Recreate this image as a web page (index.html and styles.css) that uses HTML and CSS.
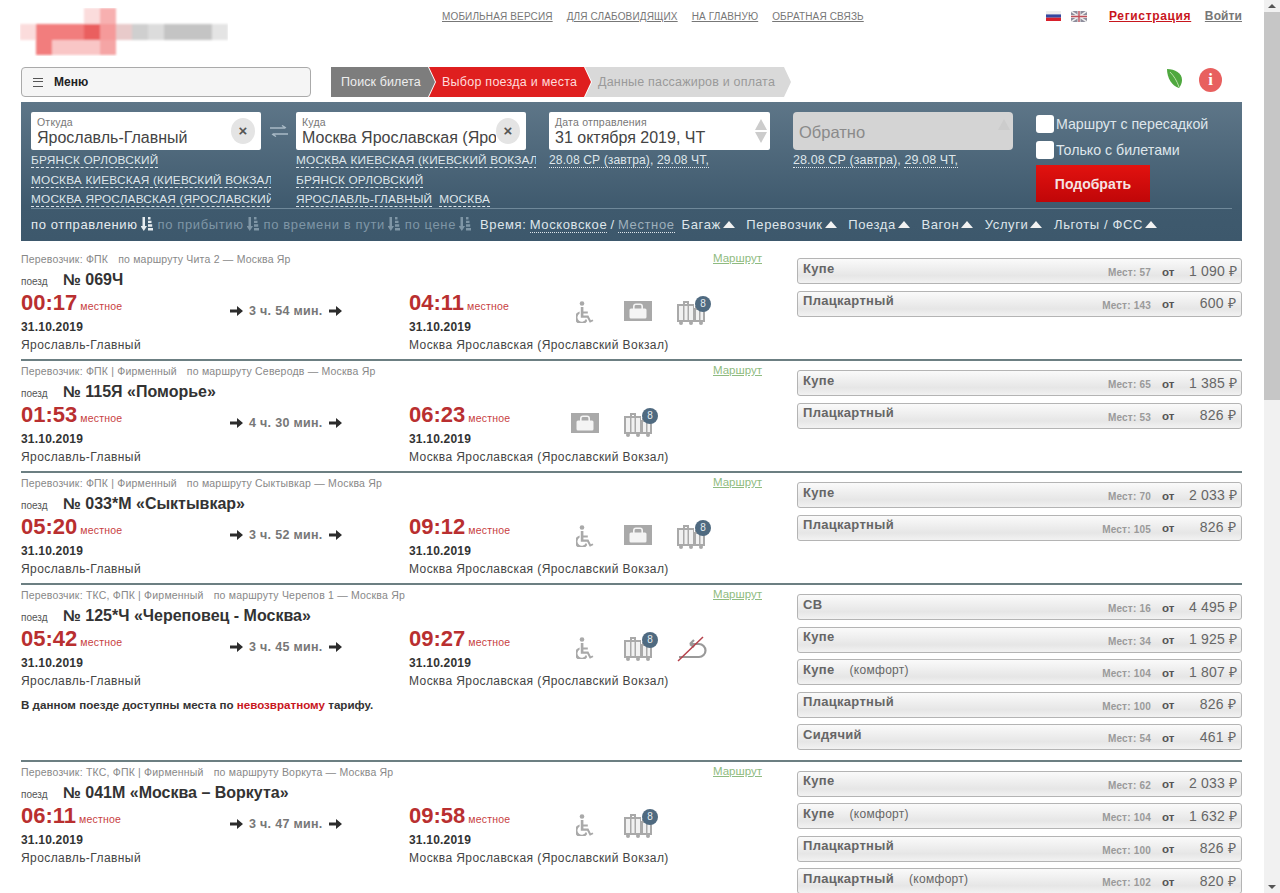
FILE: index.html
```html
<!DOCTYPE html>
<html lang="ru">
<head>
<meta charset="UTF-8">
<title>Выбор поезда и места</title>
<link rel="stylesheet" href="styles.css">
</head>
<body>
<svg class="defs" width="0" height="0">
	<defs>
		<symbol id="chair" viewBox="0 0 18 22">
			<circle cx="6" cy="2.500" r="2.300"/>
			<path d="M4.800 6h2.600v4.400h4.400v2H7.400v2.200h5l2.400 4.600 1.800-.8.800 1.700-3.600 1.600-2.600-5H4.800z"/>
			<path d="M3.600 10.400v2.200a4.400 4.400 0 1 0 6.400 5.200l1.200 2.200a6.600 6.600 0 1 1-7.600-9.600z"/>
		</symbol>
		<symbol id="bag" viewBox="0 0 28 20">
			<rect width="28" height="20"/>
			<path d="M9 8V5.500A3 3 0 0 1 12 2.500h4A3 3 0 0 1 19 5.500V8h-1.600V5.500a1.400 1.400 0 0 0-1.400-1.400h-4a1.400 1.400 0 0 0-1.400 1.400V8zM7 7.500h14q1.500 0 1.500 1.500v7q0 1.500-1.500 1.500H7q-1.500 0-1.500-1.500V9q0-1.500 1.500-1.500z" fill="#f4f4f4"/>
		</symbol>
		<symbol id="cases" viewBox="0 0 28 24">
			<path d="M6 3V0h6v3h5v4h1V5h6v2h4v14H0V3zM8 2v1h2V2zM20 6.500V7h2v-.5z"/>
			<path d="M2 5h4v14H2zM7.500 5h3v14h-3zM12 5h4v14h-4zM19 9h3v10h-3zM23.500 9H26v10h-2.500z" fill="#f1f1f1"/>
			<circle cx="4" cy="22" r="2"/><circle cx="14" cy="22" r="2"/><circle cx="24" cy="22" r="2"/>
		</symbol>
		<symbol id="sort" viewBox="0 0 12 14">
			<path d="M1.500 0h2.500v9h2l-3.200 5L-.500 9h2z"/>
			<path d="M7 0h2.500v2.500H7zM7 3.700h3.500v2.400H7zM7 7.300h4.200v2.400H7zM7 11h5v2.500H7z"/>
		</symbol>
		<symbol id="go" viewBox="0 0 13 10">
			<path d="M0 3.500h7V0l6 5-6 5V6.500H0z"/>
		</symbol>
	</defs>
</svg>

<div class="screen">
<div class="page">

	<div class="top">
		<svg class="logo" width="208" height="48" viewBox="0 0 208 48">
			<defs><filter id="pix"><feGaussianBlur stdDeviation="1.200"/></filter></defs>
			<g filter="url(#pix)">
				<rect x="0" y="16" width="16" height="16" fill="#fbdcdc"/>
				<rect x="16" y="16" width="48" height="16" fill="#f27d7d"/>
				<rect x="64" y="16" width="16" height="16" fill="#ea5f5f"/>
				<rect x="80" y="16" width="16" height="16" fill="#f59a9a"/>
				<rect x="16" y="32" width="16" height="15" fill="#f27d7d"/>
				<rect x="32" y="32" width="48" height="15" fill="#f9c6c6"/>
				<rect x="80" y="32" width="16" height="15" fill="#f5a5a5"/>
				<rect x="64" y="0" width="16" height="16" fill="#fbdcdc"/>
				<rect x="80" y="0" width="16" height="16" fill="#f7b0b0"/>
				<rect x="96" y="16" width="16" height="16" fill="#e8caca"/>
				<rect x="112" y="16" width="16" height="16" fill="#cfcfcf"/>
				<rect x="128" y="16" width="16" height="16" fill="#dcdcdc"/>
				<rect x="144" y="16" width="48" height="16" fill="#c4c4c4"/>
				<rect x="192" y="16" width="16" height="16" fill="#e4e4e4"/>
			</g>
		</svg>
		<nav class="toplinks">
			<a>Мобильная версия</a>
			<a>Для слабовидящих</a>
			<a>На главную</a>
			<a>Обратная связь</a>
		</nav>
		<div class="flags">
			<svg width="15" height="10" viewBox="0 0 15 10"><rect width="15" height="3.400" fill="#eee"/><rect y="3.400" width="15" height="3.300" fill="#3448a0"/><rect y="6.700" width="15" height="3.300" fill="#d8202c"/></svg>
			<svg width="16" height="11" viewBox="0 0 16 11"><rect width="16" height="11" fill="#8d8d9c"/><path d="M0 0l16 11M16 0L0 11" stroke="#eee" stroke-width="1.500"/><path d="M8 0v11M0 5.500h16" stroke="#eee" stroke-width="3"/><path d="M8 0v11M0 5.500h16" stroke="#c0505a" stroke-width="1.400"/></svg>
		</div>
		<a class="reg">Регистрация</a>
		<a class="login">Войти</a>
	</div>

	<div class="toolbar">
		<div class="menu"><span class="burger"></span>Меню</div>
		<div class="steps">
			<div class="step step-done">Поиск билета</div>
			<div class="step step-now">Выбор поезда и места</div>
			<div class="step step-next">Данные пассажиров и оплата</div>
		</div>
		<div class="tools">
			<svg width="17" height="21" viewBox="0 0 17 21"><path d="M1 1c8 0 15 4 15 11 0 3-1 5-3 8C6 18 1 10 1 1z" fill="#4fa83f"/><path d="M4 4c4 4 7 9 9 15" stroke="#b9e0a8" fill="none"/></svg>
			<div class="info">i</div>
		</div>
	</div>

	<div class="search">
		<div class="fields">
			<div class="col col-from">
				<div class="box">
					<label>Откуда</label>
					<div class="val">Ярославль-Главный</div>
					<span class="clear">×</span>
				</div>
				<div class="hints">
					<div><a>Брянск Орловский</a></div>
					<div><a>Москва Киевская (Киевский вокзал)</a></div>
					<div><a>Москва Ярославская (Ярославский вокзал)</a></div>
				</div>
			</div>
			<svg class="swap" width="18" height="12" viewBox="0 0 18 12"><path d="M0 3h15M12 .5L16 3M18 9H3M6 11.500L2 9" stroke="#a9bac6" stroke-width="1.400" fill="none"/></svg>
			<div class="col col-to">
				<div class="box">
					<label>Куда</label>
					<div class="val">Москва Ярославская (Ярославский вокзал)</div>
					<span class="clear">×</span>
				</div>
				<div class="hints">
					<div><a>Москва Киевская (Киевский вокзал)</a></div>
					<div><a>Брянск Орловский</a></div>
					<div><a>Ярославль-Главный</a> &nbsp;<a>Москва</a></div>
				</div>
			</div>
			<div class="col col-date">
				<div class="box">
					<label>Дата отправления</label>
					<div class="val">31 октября 2019, ЧТ</div>
					<span class="spin"><i class="up"></i><i class="down"></i></span>
				</div>
				<div class="dates"><a>28.08 СР (завтра)</a>, <a>29.08 ЧТ,</a></div>
			</div>
			<div class="col col-back">
				<div class="box box-off">
					<div class="val">Обратно</div>
					<span class="spin"><i class="up"></i></span>
				</div>
				<div class="dates"><a>28.08 СР (завтра)</a>, <a>29.08 ЧТ,</a></div>
			</div>
			<div class="col col-opts">
				<div class="opt"><span class="check"></span>Маршрут с пересадкой</div>
				<div class="opt"><span class="check"></span>Только с билетами</div>
				<div class="pick">Подобрать</div>
			</div>
		</div>
		<div class="sortbar">
			<span class="s s-on">по отправлению<svg><use href="#sort"/></svg></span>
			<span class="s">по прибытию<svg><use href="#sort"/></svg></span>
			<span class="s">по времени в пути<svg><use href="#sort"/></svg></span>
			<span class="s">по цене<svg><use href="#sort"/></svg></span>
			<span class="tz">Время: <a>Московское</a> / <a class="tz-off">Местное</a></span>
			<span class="f">Багаж</span>
			<span class="f">Перевозчик</span>
			<span class="f">Поезда</span>
			<span class="f">Вагон</span>
			<span class="f">Услуги</span>
			<span class="f">Льготы / ФСС</span>
		</div>
	</div>

	<div class="train">
		<div class="info-col">
			<div class="meta"><span>Перевозчик: ФПК<b>по маршруту Чита 2 — Москва Яр</b></span><a>Маршрут</a></div>
			<div class="name"><small>поезд</small><strong>№ 069Ч</strong></div>
			<div class="times">
				<div><div class="t">00:17<em>местное</em></div><div class="d">31.10.2019</div><div class="st">Ярославль-Главный</div></div>
				<div class="dur"><svg><use href="#go"/></svg>3 ч. 54 мин.<svg><use href="#go"/></svg></div>
				<div><div class="t">04:11<em>местное</em></div><div class="d">31.10.2019</div><div class="st">Москва Ярославская (Ярославский Вокзал)</div></div>
				<div class="icons">
					<span class="ic"><svg class="i-chair"><use href="#chair"/></svg></span>
					<span class="ic"><svg class="i-bag"><use href="#bag"/></svg></span>
					<span class="ic"><svg class="i-cases"><use href="#cases"/></svg><span class="badge">8</span></span>
				</div>
			</div>
		</div>
		<div class="cars">
			<div class="car"><span class="c">Купе</span><span class="seats">Мест: 57</span><span class="from">от</span><span class="price">1 090 ₽</span></div>
			<div class="car"><span class="c">Плацкартный</span><span class="seats">Мест: 143</span><span class="from">от</span><span class="price">600 ₽</span></div>
		</div>
	</div>

	<div class="train">
		<div class="info-col">
			<div class="meta"><span>Перевозчик: ФПК | Фирменный<b>по маршруту Северодв — Москва Яр</b></span><a>Маршрут</a></div>
			<div class="name"><small>поезд</small><strong>№ 115Я «Поморье»</strong></div>
			<div class="times">
				<div><div class="t">01:53<em>местное</em></div><div class="d">31.10.2019</div><div class="st">Ярославль-Главный</div></div>
				<div class="dur"><svg><use href="#go"/></svg>4 ч. 30 мин.<svg><use href="#go"/></svg></div>
				<div><div class="t">06:23<em>местное</em></div><div class="d">31.10.2019</div><div class="st">Москва Ярославская (Ярославский Вокзал)</div></div>
				<div class="icons">
					<span class="ic"><svg class="i-bag"><use href="#bag"/></svg></span>
					<span class="ic"><svg class="i-cases"><use href="#cases"/></svg><span class="badge">8</span></span>
				</div>
			</div>
		</div>
		<div class="cars">
			<div class="car"><span class="c">Купе</span><span class="seats">Мест: 65</span><span class="from">от</span><span class="price">1 385 ₽</span></div>
			<div class="car"><span class="c">Плацкартный</span><span class="seats">Мест: 53</span><span class="from">от</span><span class="price">826 ₽</span></div>
		</div>
	</div>

	<div class="train">
		<div class="info-col">
			<div class="meta"><span>Перевозчик: ФПК | Фирменный<b>по маршруту Сыктывкар — Москва Яр</b></span><a>Маршрут</a></div>
			<div class="name"><small>поезд</small><strong>№ 033*М «Сыктывкар»</strong></div>
			<div class="times">
				<div><div class="t">05:20<em>местное</em></div><div class="d">31.10.2019</div><div class="st">Ярославль-Главный</div></div>
				<div class="dur"><svg><use href="#go"/></svg>3 ч. 52 мин.<svg><use href="#go"/></svg></div>
				<div><div class="t">09:12<em>местное</em></div><div class="d">31.10.2019</div><div class="st">Москва Ярославская (Ярославский Вокзал)</div></div>
				<div class="icons">
					<span class="ic"><svg class="i-chair"><use href="#chair"/></svg></span>
					<span class="ic"><svg class="i-bag"><use href="#bag"/></svg></span>
					<span class="ic"><svg class="i-cases"><use href="#cases"/></svg><span class="badge">8</span></span>
				</div>
			</div>
		</div>
		<div class="cars">
			<div class="car"><span class="c">Купе</span><span class="seats">Мест: 70</span><span class="from">от</span><span class="price">2 033 ₽</span></div>
			<div class="car"><span class="c">Плацкартный</span><span class="seats">Мест: 105</span><span class="from">от</span><span class="price">826 ₽</span></div>
		</div>
	</div>

	<div class="train">
		<div class="info-col">
			<div class="meta"><span>Перевозчик: ТКС, ФПК | Фирменный<b>по маршруту Черепов 1 — Москва Яр</b></span><a>Маршрут</a></div>
			<div class="name"><small>поезд</small><strong>№ 125*Ч «Череповец - Москва»</strong></div>
			<div class="times">
				<div><div class="t">05:42<em>местное</em></div><div class="d">31.10.2019</div><div class="st">Ярославль-Главный</div></div>
				<div class="dur"><svg><use href="#go"/></svg>3 ч. 45 мин.<svg><use href="#go"/></svg></div>
				<div><div class="t">09:27<em>местное</em></div><div class="d">31.10.2019</div><div class="st">Москва Ярославская (Ярославский Вокзал)</div></div>
				<div class="icons">
					<span class="ic"><svg class="i-chair"><use href="#chair"/></svg></span>
					<span class="ic"><svg class="i-cases"><use href="#cases"/></svg><span class="badge">8</span></span>
					<span class="ic"><svg class="i-noway" viewBox="0 0 32 26"><path d="M2 21h20a6.500 6.500 0 0 0 0-13H13M13 8l4-4M13 8l4 3" stroke="#999" stroke-width="2.200" fill="none"/><path d="M1 25L26 1" stroke="#b5404a" stroke-width="1.500"/></svg></span>
				</div>
			</div>
			<div class="note">В данном поезде доступны места по <span>невозвратному</span> тарифу.</div>
		</div>
		<div class="cars">
			<div class="car"><span class="c">СВ</span><span class="seats">Мест: 16</span><span class="from">от</span><span class="price">4 495 ₽</span></div>
			<div class="car"><span class="c">Купе</span><span class="seats">Мест: 34</span><span class="from">от</span><span class="price">1 925 ₽</span></div>
			<div class="car"><span class="c">Купе<i>(комфорт)</i></span><span class="seats">Мест: 104</span><span class="from">от</span><span class="price">1 807 ₽</span></div>
			<div class="car"><span class="c">Плацкартный</span><span class="seats">Мест: 100</span><span class="from">от</span><span class="price">826 ₽</span></div>
			<div class="car"><span class="c">Сидячий</span><span class="seats">Мест: 54</span><span class="from">от</span><span class="price">461 ₽</span></div>
		</div>
	</div>

	<div class="train">
		<div class="info-col">
			<div class="meta"><span>Перевозчик: ТКС, ФПК | Фирменный<b>по маршруту Воркута — Москва Яр</b></span><a>Маршрут</a></div>
			<div class="name"><small>поезд</small><strong>№ 041М «Москва – Воркута»</strong></div>
			<div class="times">
				<div><div class="t">06:11<em>местное</em></div><div class="d">31.10.2019</div><div class="st">Ярославль-Главный</div></div>
				<div class="dur"><svg><use href="#go"/></svg>3 ч. 47 мин.<svg><use href="#go"/></svg></div>
				<div><div class="t">09:58<em>местное</em></div><div class="d">31.10.2019</div><div class="st">Москва Ярославская (Ярославский Вокзал)</div></div>
				<div class="icons">
					<span class="ic"><svg class="i-chair"><use href="#chair"/></svg></span>
					<span class="ic"><svg class="i-cases"><use href="#cases"/></svg><span class="badge">8</span></span>
				</div>
			</div>
		</div>
		<div class="cars">
			<div class="car"><span class="c">Купе</span><span class="seats">Мест: 62</span><span class="from">от</span><span class="price">2 033 ₽</span></div>
			<div class="car"><span class="c">Купе<i>(комфорт)</i></span><span class="seats">Мест: 104</span><span class="from">от</span><span class="price">1 632 ₽</span></div>
			<div class="car"><span class="c">Плацкартный</span><span class="seats">Мест: 100</span><span class="from">от</span><span class="price">826 ₽</span></div>
			<div class="car"><span class="c">Плацкартный<i>(комфорт)</i></span><span class="seats">Мест: 102</span><span class="from">от</span><span class="price">820 ₽</span></div>
		</div>
	</div>

</div>
<div class="scroll">
	<span class="arrow arrow-up"></span>
	<div class="thumb"></div>
	<span class="arrow arrow-down"></span>
</div>
</div>
</body>
</html>
```

FILE: styles.css
```css
* {
	margin: 0;
	padding: 0;
	box-sizing: border-box;
}

html, body {
	height: 893px;
	overflow: hidden;
	background: #fff;
}

body {
	font-family: "Liberation Sans", Arial, sans-serif;
	color: #333;
}

.defs {
	position: absolute;
}

.screen {
	display: flex;
	height: 893px;
	overflow: hidden;
}

.page {
	width: 1264px;
	padding: 0 22px 0 21px;
	flex: none;
}

/* scrollbar */
.scroll {
	width: 16px;
	background: #f1f1f1;
	display: flex;
	flex-direction: column;
	align-items: center;
	justify-content: space-between;
}

.thumb {
	width: 16px;
	height: 388px;
	background: #c6c6c6;
	margin-bottom: auto;
}

.arrow {
	width: 0;
	height: 0;
	margin: 4px 0;
	border-left: 4px solid transparent;
	border-right: 4px solid transparent;
}

.arrow-up {
	border-bottom: 4px solid #555;
}

.arrow-down {
	border-top: 4px solid #555;
}

/* top */
.top {
	height: 67px;
	display: flex;
	align-items: flex-start;
}

.logo {
	margin: 8px 0 0 -1px;
	flex: none;
}

.toplinks {
	display: flex;
	gap: 14px;
	margin: 11px 0 0 214px;
	width: 604px;
	font-size: 10px;
	line-height: 12px;
	letter-spacing: .14px;
	text-transform: uppercase;
	color: #777;
}

.toplinks a {
	text-decoration: underline;
}

.flags {
	display: flex;
	gap: 10px;
	margin-top: 11px;
	width: 63px;
	flex: none;
}

.reg, .login {
	font-size: 12px;
	line-height: 14px;
	margin-top: 9px;
	font-weight: bold;
	text-decoration: underline;
	letter-spacing: .65px;
}

.reg {
	color: #c8161d;
}

.login {
	color: #777;
	margin-left: auto;
	letter-spacing: .1px;
}

.toolbar {
	display: flex;
	height: 35px;
}

.menu {
	width: 290px;
	height: 30px;
	border: 1px solid #aaa;
	border-radius: 4px;
	background: #f5f5f5;
	font-size: 12px;
	font-weight: bold;
	line-height: 28px;
	padding-left: 11px;
	display: flex;
	align-items: center;
	color: #222;
}

.burger {
	width: 10px;
	height: 9px;
	margin-right: 11px;
	border-top: 1.500px solid #555;
	border-bottom: 1.500px solid #555;
}

.burger:after {
	content: "";
	display: block;
	height: 1.500px;
	margin-top: 2.250px;
	background: #555;
}

.steps {
	display: flex;
	margin-left: 20px;
	height: 30px;
	font-size: 12.500px;
	line-height: 30px;
	letter-spacing: .25px;
}

.step {
	white-space: nowrap;
	margin-right: -6px;
	clip-path: polygon(0 0, calc(100% - 7px) 0, 100% 50%, calc(100% - 7px) 100%, 0 100%, 7px 50%);
}

.step-done {
	width: 104px;
	padding-left: 10px;
	letter-spacing: .1px;
	background: #7d7d7d;
	color: #eee;
	clip-path: polygon(0 0, calc(100% - 7px) 0, 100% 50%, calc(100% - 7px) 100%, 0 100%);
}

.step-now {
	width: 162px;
	padding-left: 13px;
	background: #df1f1f;
	color: #ffdcdc;
}

.step-next {
	width: 206px;
	padding-left: 13px;
	letter-spacing: .2px;
	background: #d9d9d9;
	color: #9a9a9a;
}

.tools {
	margin-left: auto;
	margin-right: 20px;
	display: flex;
	align-items: flex-start;
	gap: 16px;
	padding-top: 1px;
}

.info {
	width: 23px;
	height: 24px;
	border-radius: 50%;
	background: #e8605f;
	color: #fff;
	font: bold 17px/24px "Liberation Serif", serif;
	text-align: center;
}

/* search panel */
.search {
	height: 139px;
	margin-bottom: 8px;
	padding: 10px 10px 0;
	background: linear-gradient(#5e7688, #3f5a6e 75%, #3d586c);
	color: #dfe6eb;
}

.fields {
	display: flex;
	height: 96px;
}

.col {
	flex: none;
}

.col-from, .col-to {
	width: 240px;
}

.col-to {
	margin-left: 8px;
}

.swap {
	margin: 13px 0 0 -1px;
	flex: none;
}

.col-date {
	width: 221px;
	margin-left: 13px;
}

.col-back {
	width: 220px;
	margin-left: 23px;
}

.col-opts {
	margin-left: 23px;
}

.box {
	position: relative;
	width: 230px;
	height: 38px;
	background: #fff;
	border-radius: 2px;
	padding: 5px 30px 0 6px;
	color: #444;
	overflow: hidden;
}

.col-date .box {
	width: 221px;
}

.box-off {
	width: 220px;
	background: #d4d4d4;
	color: #8a8a8a;
	padding-top: 11px;
	border-radius: 4px;
}

.box label {
	display: block;
	font-size: 10.500px;
	line-height: 11px;
	color: #777;
	letter-spacing: .2px;
}

.val {
	font-size: 16px;
	line-height: 19px;
	white-space: nowrap;
	overflow: hidden;
}

.box-off .val {
	font-size: 16.500px;
}

.clear {
	position: absolute;
	right: 6px;
	top: 6px;
	width: 24px;
	height: 26px;
	border-radius: 50%;
	background: #e4e4e4;
	color: #555;
	font: bold 15px/25px "Liberation Sans", sans-serif;
	text-align: center;
}

.spin {
	position: absolute;
	right: 3px;
	top: 7px;
}

.spin i {
	display: block;
	width: 0;
	height: 0;
	margin-bottom: 2px;
	border-left: 6px solid transparent;
	border-right: 6px solid transparent;
}

.spin .up {
	border-bottom: 11px solid #ccc;
}

.spin .down {
	border-top: 11px solid #ccc;
}

.hints {
	margin-top: 1px;
	font-size: 11.800px;
	line-height: 19.500px;
	letter-spacing: .2px;
	text-transform: uppercase;
	white-space: nowrap;
	overflow: hidden;
}

.hints a {
	border-bottom: 1px dashed #dfe6eb;
}

.dates {
	margin-top: 1px;
	font-size: 12.500px;
	line-height: 19px;
	letter-spacing: .1px;
	white-space: nowrap;
}

.col-date .dates {
	font-size: 12.100px;
}

.dates a {
	border-bottom: 1px dotted #dfe6eb;
}

.opt {
	display: flex;
	align-items: center;
	height: 26px;
	font-size: 14.200px;
	white-space: nowrap;
	position: relative;
	top: -1px;
}

.check {
	width: 18px;
	height: 18px;
	margin-right: 2px;
	border-radius: 3px;
	background: #fff;
}

.pick {
	width: 114px;
	height: 37px;
	margin-top: 1px;
	background: linear-gradient(#e2120f, #c00608);
	color: #f6e3e3;
	font-size: 14px;
	font-weight: bold;
	line-height: 38px;
	text-align: center;
}

.sortbar {
	display: flex;
	align-items: center;
	height: 31px;
	border-top: 1px solid #6f8899;
	font-size: 13px;
	letter-spacing: .62px;
	white-space: nowrap;
}

.sortbar svg {
	width: 12px;
	height: 14px;
	margin-left: 3px;
	vertical-align: -2px;
	fill: #7f96a6;
}

.s {
	color: #7f96a6;
	margin-right: 5px;
}

.s-on {
	color: #e6ecf0;
}

.s-on svg {
	fill: #e6ecf0;
}

.tz {
	margin-left: 4px;
	margin-right: 7px;
	word-spacing: -1px;
}

.tz a {
	border-bottom: 1px dotted #dfe6eb;
}

.tz .tz-off {
	color: #9fb0bc;
}

.f {
	margin-right: 11.500px;
	display: flex;
	align-items: center;
}

.f:after {
	content: "";
	margin-left: 2px;
	border-left: 6px solid transparent;
	border-right: 6px solid transparent;
	border-bottom: 7px solid #f2f2f2;
}

/* trains */
.train {
	display: flex;
	justify-content: space-between;
	min-height: 112px;
	padding: 3px 0;
	border-bottom: 2px solid #6c7f82;
}

.train:last-child {
	border-bottom: 0;
}

.info-col {
	width: 741px;
}

.meta {
	display: flex;
	justify-content: space-between;
	height: 14px;
	font-size: 10.500px;
	line-height: 14px;
	letter-spacing: .2px;
	color: #888;
}

.meta b {
	font-weight: normal;
	margin-left: 10px;
}

.meta a {
	font-size: 11.500px;
	letter-spacing: 0;
	color: #8fbb80;
	text-decoration: underline;
	position: relative;
	top: -1px;
}

.name {
	display: flex;
	align-items: baseline;
	height: 26px;
	line-height: 28px;
}

.name small {
	width: 42px;
	font-size: 10px;
	color: #555;
}

.name strong {
	font-size: 16px;
	color: #333;
}

.times {
	display: grid;
	grid-template-columns: 209px 179px 162px 1fr;
}

.t {
	height: 22px;
	font-size: 22px;
	line-height: 22px;
	font-weight: bold;
	color: #b92f30;
	white-space: nowrap;
}

.t em {
	margin-left: 3px;
	font-size: 10.500px;
	font-style: normal;
	font-weight: normal;
	letter-spacing: .2px;
	color: #c8413f;
}

.d {
	margin-top: 4px;
	height: 18px;
	font-size: 12px;
	line-height: 18px;
	font-weight: bold;
	letter-spacing: .2px;
}

.st {
	height: 18px;
	font-size: 12px;
	line-height: 18px;
	letter-spacing: .42px;
	white-space: nowrap;
	color: #444;
}

.dur {
	display: flex;
	align-items: center;
	height: 20px;
	margin-top: 9px;
	gap: 6px;
	font-size: 12.500px;
	font-weight: bold;
	letter-spacing: .3px;
	color: #777;
}

.dur svg {
	width: 13px;
	height: 10px;
	fill: #2c2c2c;
}

.icons {
	display: flex;
	height: 30px;
	margin-top: 8px;
}

.ic {
	position: relative;
	width: 53px;
	flex: none;
	fill: #a9a9a9;
}

.i-chair {
	width: 18px;
	height: 22px;
	margin: 1px 0 0 5px;
}

.i-bag {
	width: 28px;
	height: 20px;
	margin-top: 1px;
}

.i-cases {
	width: 28px;
	height: 24px;
	margin-top: 1px;
}

.i-noway {
	width: 32px;
	height: 26px;
}

.badge {
	position: absolute;
	left: 18px;
	top: -4px;
	width: 16px;
	height: 16px;
	border-radius: 50%;
	background: #4f6a80;
	color: #e6ecf0;
	font-size: 10px;
	line-height: 16px;
	text-align: center;
}

.note {
	margin-top: 8px;
	font-size: 11.600px;
	font-weight: bold;
	line-height: 14px;
	color: #333;
}

.note span {
	color: #c8161d;
}

.cars {
	width: 445px;
	padding-top: 6px;
	flex: none;
}

.car {
	display: flex;
	align-items: center;
	height: 26px;
	margin-bottom: 6.500px;
	padding: 0 5px 0 5px;
	border: 1px solid #b4b4b4;
	border-radius: 3px;
	background: linear-gradient(#fafafa, #e6e6e6 70%, #f2f2f2);
	color: #666;
	white-space: nowrap;
}

.c {
	font-size: 13px;
	font-weight: bold;
	letter-spacing: .3px;
	position: relative;
	top: -3px;
	margin-right: auto;
}

.c i {
	margin-left: 15px;
	font-size: 12px;
	font-style: normal;
	font-weight: normal;
}

.seats {
	margin-top: 3px;
	font-size: 10px;
	font-weight: bold;
	letter-spacing: .2px;
	color: #9a9a9a;
}

.from {
	width: 27px;
	margin: 1px 0 0 11px;
	font-size: 11.500px;
	font-weight: bold;
	color: #555;
}

.price {
	width: 47px;
	margin-bottom: 2px;
	font-size: 14px;
	letter-spacing: .2px;
	text-align: right;
}
```
